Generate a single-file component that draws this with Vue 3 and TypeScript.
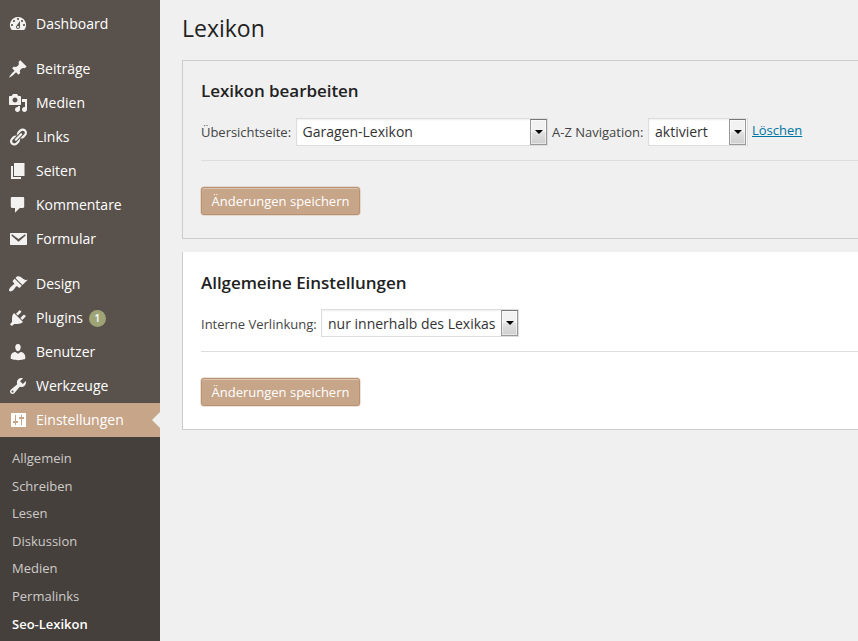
<script setup lang="ts">
interface MenuItem {
  label: string
  icon: string
  badge?: number
  active?: boolean
}

const menuGroups: MenuItem[][] = [
  [
    {
      label: 'Dashboard',
      icon: 'M3.76 16h12.48A7.998 7.998 0 0 0 10 3a7.998 7.998 0 0 0-6.24 13zM10 4c.55 0 1 .45 1 1s-.45 1-1 1-1-.45-1-1 .45-1 1-1zM6 6c.55 0 1 .45 1 1s-.45 1-1 1-1-.45-1-1 .45-1 1-1zm8 0c.55 0 1 .45 1 1s-.45 1-1 1-1-.45-1-1 .45-1 1-1zm-5.37 5.55L12 7v6c0 1.1-.9 2-2 2s-2-.9-2-2c0-.57.24-1.08.63-1.45zM4 10c.55 0 1 .45 1 1s-.45 1-1 1-1-.45-1-1 .45-1 1-1zm12 0c.55 0 1 .45 1 1s-.45 1-1 1-1-.45-1-1 .45-1 1-1zm-5 3c0-.55-.45-1-1-1s-1 .45-1 1 .45 1 1 1 1-.45 1-1z',
    },
  ],
  [
    {
      label: 'Beiträge',
      icon: 'M10.44 3.02l1.82-1.82 6.36 6.35-1.83 1.82c-1.05-.68-2.48-.57-3.41.36l-.75.75c-.92.93-1.04 2.35-.35 3.41l-1.83 1.82-2.41-2.41-2.8 2.79c-.42.42-3.38 2.71-3.8 2.29s1.86-3.39 2.28-3.81l2.79-2.79L4.1 9.36l1.83-1.82c1.05.69 2.48.57 3.4-.36l.75-.75c.93-.92 1.05-2.35.36-3.41z',
    },
    {
      label: 'Medien',
      icon: 'M13 11V4c0-.55-.45-1-1-1h-1.67L9 1H5L3.67 3H2c-.55 0-1 .45-1 1v7c0 .55.45 1 1 1h10c.55 0 1-.45 1-1zM7 4.5c1.38 0 2.5 1.12 2.5 2.5S8.38 9.5 7 9.5 4.5 8.38 4.5 7 5.62 4.5 7 4.5zM14 6h5v10.5c0 1.38-1.12 2.5-2.5 2.5S14 17.88 14 16.5s1.12-2.5 2.5-2.5c.17 0 .34.02.5.05V9h-3V6zm-4 8.05V13h2v3.5c0 1.38-1.12 2.5-2.5 2.5S7 17.88 7 16.5 8.12 14 9.5 14c.17 0 .34.02.5.05z',
    },
    {
      label: 'Links',
      icon: 'M17.74 2.76c1.68 1.69 1.68 4.41 0 6.1l-1.53 1.52c-1.12 1.12-2.7 1.47-4.14 1.09l2.62-2.61.76-.77.76-.76c.84-.84.84-2.2 0-3.04-.84-.85-2.2-.85-3.04 0l-.77.76-3.38 3.38c-.37-1.44-.02-3.02 1.1-4.14l1.52-1.53c1.69-1.68 4.42-1.68 6.1 0zM8.59 13.43l5.34-5.34c.42-.42.42-1.1 0-1.52-.44-.43-1.13-.39-1.53 0l-5.33 5.34c-.42.42-.42 1.1 0 1.52.44.43 1.13.39 1.52 0zm-.76 2.29l4.14-4.15c.38 1.44.03 3.02-1.09 4.14l-1.52 1.53c-1.69 1.68-4.41 1.68-6.1 0-1.68-1.68-1.68-4.42 0-6.1l1.53-1.52c1.12-1.12 2.7-1.47 4.14-1.1l-4.14 4.15c-.85.84-.85 2.2 0 3.05.84.84 2.2.84 3.04 0z',
    },
    { label: 'Seiten', icon: 'M6 15V2h10.5v13H6zm-1 1h8v2H3V5h2v11z' },
    {
      label: 'Kommentare',
      icon: 'M4 2h11c.6 0 1.2.6 1.2 1.2v8.6c0 .6-.6 1.2-1.2 1.2h-3.2L7 17.8V13H4c-.6 0-1.2-.6-1.2-1.2V3.200C2.800 2.600 3.400 2 4 2z',
    },
    {
      label: 'Formular',
      icon: 'M3 4h15c.55 0 1 .45 1 1v10c0 .55-.45 1-1 1H3c-.55 0-1-.45-1-1V5c0-.55.45-1 1-1zM4 5.300l-.7 1.200 7.200 6.300 7.200-6.300-.7-1.200-6.500 4.700z',
    },
  ],
  [
    {
      label: 'Design',
      icon: 'M14.48 11.06L7.41 3.99l1.5-1.5c.5-.56 2.3-.47 3.51.32 1.21.8 1.43 1.28 2.91 2.1 1.18.64 2.45 1.26 4.45.85zm-.71.71L6.7 4.7 4.93 6.47c-.39.39-.39 1.02 0 1.41l1.06 1.06c.39.39.39 1.03 0 1.42-.6.6-1.43 1.11-2.21 1.69-.35.26-.7.53-1.01.84C1.43 14.23.4 16.08 1.4 17.07c.99 1 2.84-.03 4.18-1.36.31-.31.58-.66.85-1.02.57-.78 1.08-1.61 1.69-2.21.39-.39 1.02-.39 1.41 0l1.06 1.06c.39.39 1.02.39 1.41 0z',
    },
    {
      label: 'Plugins',
      badge: 1,
      icon: 'M13.11 4.36L9.87 7.6 8 5.73l3.24-3.24c.35-.34 1.05-.2 1.56.32.52.51.66 1.21.31 1.55zm-8 1.77l.91-1.12 9.01 9.01-1.19.84c-.71.71-2.63 1.16-3.82 1.16H6.14L4.9 17.26c-.59.59-1.54.59-2.12 0-.59-.58-.59-1.53 0-2.12l1.24-1.24v-3.88c0-1.13.4-3.19 1.09-3.89zm7.26 3.97l3.24-3.24c.34-.35 1.04-.21 1.55.31.52.51.66 1.21.31 1.55l-3.24 3.25z',
    },
    {
      label: 'Benutzer',
      icon: 'M10 9.25c-2.27 0-2.73-3.44-2.73-3.44C7 4.02 7.82 2 9.97 2c2.16 0 2.98 2.02 2.71 3.81 0 0-.41 3.44-2.68 3.44zm0 2.57L12.72 10c2.39 0 4.52 2.33 4.52 4.53v2.49s-3.65 1.13-7.24 1.13c-3.65 0-7.24-1.13-7.24-1.13v-2.49c0-2.25 1.94-4.48 4.47-4.48z',
    },
    {
      label: 'Werkzeuge',
      icon: 'M16.68 9.77c-1.34 1.34-3.3 1.67-4.95.99l-5.41 6.52c-.99.99-2.59.99-3.58 0s-.99-2.59 0-3.57l6.52-5.42c-.68-1.65-.35-3.61.99-4.95 1.28-1.28 3.12-1.62 4.72-1.06l-2.89 2.89 2.82 2.82 2.86-2.87c.53 1.58.18 3.39-1.08 4.65zM3.81 16.21c.4.39 1.04.39 1.43 0 .4-.4.4-1.04 0-1.43-.39-.4-1.03-.4-1.43 0-.39.39-.39 1.03 0 1.43z',
    },
    {
      label: 'Einstellungen',
      active: true,
      icon: 'M3.500 3h14a.5.5 0 0 1 .5.5v13a.5.5 0 0 1-.5.5h-14a.5.5 0 0 1-.5-.5v-13a.5.5 0 0 1 .5-.5zM7 5v6H5v2h2v2h1v-2h2v-2H8V5zM13 5v2h-2v2h2v6h1V9h2V7h-2V5z',
    },
  ],
]

const subItems: string[] = ['Allgemein', 'Schreiben', 'Lesen', 'Diskussion', 'Medien', 'Permalinks', 'Seo-Lexikon']
const currentSub = 'Seo-Lexikon'
</script>

<template>
  <div class="admin">
    <nav class="sidebar">
      <ul v-for="(group, g) in menuGroups" :key="g" class="group">
        <li v-for="item in group" :key="item.label" class="item" :class="{ active: item.active }">
          <svg class="icon" viewBox="0 0 20 20" width="20" height="20">
            <path :d="item.icon" fill-rule="evenodd" />
          </svg>
          <span class="label">{{ item.label }}</span>
          <span v-if="item.badge" class="badge">{{ item.badge }}</span>
        </li>
      </ul>
      <ul class="submenu">
        <li v-for="sub in subItems" :key="sub" :class="{ current: sub === currentSub }">
          <span>{{ sub }}</span>
        </li>
      </ul>
    </nav>

    <main class="content">
      <h1>Lexikon</h1>

      <section class="panel">
        <h2>Lexikon bearbeiten</h2>
        <div class="row">
          <span class="field-label overview">Übersichtseite:</span>
          <div class="select wide">
            <span class="value">Garagen-Lexikon</span>
            <span class="arrow"><svg viewBox="0 0 8 4" width="8" height="4"><path d="M0 0h8L4 4z" /></svg></span>
          </div>
          <span class="field-label nav-label">A-Z Navigation:</span>
          <div class="select narrow">
            <span class="value">aktiviert</span>
            <span class="arrow"><svg viewBox="0 0 8 4" width="8" height="4"><path d="M0 0h8L4 4z" /></svg></span>
          </div>
          <a class="delete">Löschen</a>
        </div>
        <button type="button" class="save">Änderungen speichern</button>
      </section>

      <section class="panel white">
        <h2>Allgemeine Einstellungen</h2>
        <div class="row">
          <span class="field-label linking">Interne Verlinkung:</span>
          <div class="select medium">
            <span class="value">nur innerhalb des Lexikas</span>
            <span class="arrow"><svg viewBox="0 0 8 4" width="8" height="4"><path d="M0 0h8L4 4z" /></svg></span>
          </div>
        </div>
        <button type="button" class="save">Änderungen speichern</button>
      </section>
    </main>
  </div>
</template>

<style>
body {
  margin: 0;
  background: #f0f0f0;
  overflow: hidden;
}
</style>

<style scoped>
.admin {
  display: flex;
  width: 100vw;
  height: 100vh;
  overflow: hidden;
  background: #f0f0f0;
  font-family: 'Open Sans', sans-serif;
  font-size: 13px;
  color: #444;
}
ul {
  margin: 0;
  padding: 0;
  list-style: none;
}
.sidebar {
  flex: none;
  box-sizing: border-box;
  width: 160px;
  padding-top: 7px;
  background: #59524c;
}
.group + .group {
  margin-top: 11px;
}
.item {
  position: relative;
  display: flex;
  align-items: center;
  box-sizing: border-box;
  height: 34px;
  padding-left: 8px;
  color: #fff;
  font-size: 14px;
  line-height: 18px;
}
.icon {
  flex: none;
  margin-right: 8px;
  fill: #f3f2f1;
}
.item.active {
  background: #c7a589;
}
.item.active .icon {
  fill: #fff;
}
.item.active::after {
  content: '';
  position: absolute;
  top: 9px;
  right: 0;
  border: 8px solid transparent;
  border-left: 0;
  border-right-color: #f0f0f0;
}
.badge {
  width: 17px;
  height: 17px;
  margin: 1px 0 0 6px;
  border-radius: 50%;
  background: #9ea476;
  font-size: 10px;
  font-weight: 600;
  line-height: 17px;
  text-align: center;
}
.submenu {
  height: 220px;
  padding-top: 7px;
  background: #46403c;
}
.submenu li {
  height: 27.6px;
  padding-left: 12px;
  color: #cdcbc9;
  font-size: 13px;
  line-height: 28px;
}
.submenu .current {
  color: #fff;
  font-weight: 600;
}
.content {
  flex: 1;
  min-width: 0;
  padding-left: 22px;
}
h1 {
  margin: 0;
  padding-top: 13px;
  height: 47px;
  color: #222;
  font-size: 23px;
  font-weight: 400;
  line-height: 31px;
}
.panel {
  box-sizing: border-box;
  height: 179px;
  padding: 17px 0 0 18px;
  border: 1px solid #ccc;
  border-right: 0;
}
.panel.white {
  height: 178px;
  margin-top: 13px;
  padding-top: 18px;
  border-top: 0;
  background: #fff;
}
h2 {
  margin: 0;
  color: #222;
  font-size: 17px;
  font-weight: 600;
  letter-spacing: -0.05px;
  line-height: 26px;
}
.row {
  display: flex;
  align-items: center;
  box-sizing: border-box;
  height: 57px;
  padding-bottom: 1px;
  border-bottom: 1px solid #ddd;
  white-space: nowrap;
}
.white .row {
  height: 56px;
}
.field-label {
  flex: none;
}
.overview {
  width: 95px;
  letter-spacing: -0.03px;
}
.nav-label {
  width: 96px;
  margin-left: 4px;
}
.linking {
  width: 120px;
  padding-top: 1px;
}
.select {
  display: flex;
  flex: none;
  align-items: center;
  justify-content: space-between;
  box-sizing: border-box;
  height: 28px;
  padding-left: 6px;
  border: 1px solid #ddd;
  background: #fff;
  box-shadow: inset 0 1px 2px rgba(0, 0, 0, 0.07);
  color: #333;
  font-size: 14px;
}
.wide {
  width: 252px;
}
.wide .value {
  margin-left: -0.5px;
}
.narrow {
  width: 100px;
  padding-right: 1px;
}
.medium {
  width: 198px;
}
.arrow {
  display: flex;
  align-items: center;
  justify-content: center;
  box-sizing: border-box;
  width: 17px;
  height: 26px;
  border: 1px solid #999;
  border-top-color: #777;
  background: linear-gradient(#f2f2f2 0 48%, #e2e2e2 52%, #cfcfcf);
  box-shadow: inset 0 0 0 1px rgba(255, 255, 255, 0.5);
}
.delete {
  margin: -3px 0 0 4px;
  color: #0074a2;
  text-decoration: underline;
}
.save {
  display: block;
  box-sizing: border-box;
  width: 159px;
  height: 28px;
  margin: 26px 0 0;
  padding: 0;
  border: 1px solid #ba9272;
  border-radius: 3px;
  background: #c7a589;
  box-shadow: inset 0 1px 0 #dac5b3, 0 0 0 0.5px rgba(186, 146, 114, 0.5);
  color: #fff;
  font-family: inherit;
  font-size: 13px;
  line-height: 25px;
  white-space: nowrap;
}
</style>
